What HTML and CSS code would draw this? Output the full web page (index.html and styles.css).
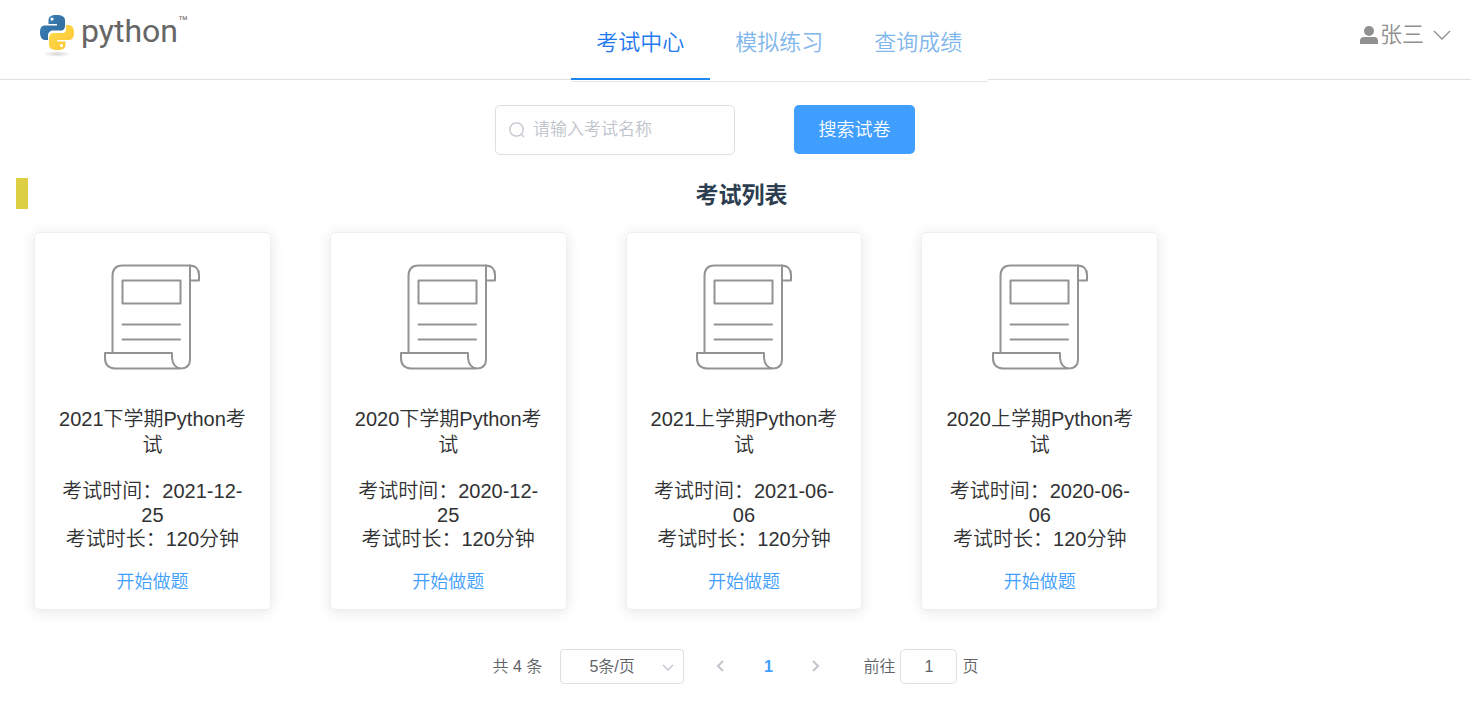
FILE: index.html
```html
<!DOCTYPE html>
<html lang="zh-CN">

<head>
  <meta charset="UTF-8" />
  <meta name="viewport" content="width=device-width, initial-scale=1.0" />
  <title>考试中心</title>
  <link rel="stylesheet" href="styles.css">
</head>

<body>
  <!-- 公共图标 -->
  <svg class="icon-defs" aria-hidden="true">
    <symbol id="icon-paper" viewBox="0 0 96 106">
      <g fill="none" stroke="#939393" stroke-width="2" stroke-linejoin="round" stroke-linecap="round">
        <path d="M8.500 88V12Q8.500 1.500 18.500 1.500H86Q95 2 95 11V16.500H86.500" />
        <path d="M86 1.500V95Q86 104.500 77 104.500H11Q1 104 1 94V89H68V94Q69 104 77 104.500" />
        <path d="M18.500 16.500H76.500V39.500H18.500Z" />
        <path d="M18.500 60.500H76M18.500 75.500H76" />
      </g>
    </symbol>
  </svg>

  <header class="header">
    <a class="logo" href="#">
      <svg class="logo-image" width="36" height="44" viewBox="0 0 36 44" aria-hidden="true">
        <defs>
          <linearGradient id="logoBlue" x1="0" y1="0" x2="1" y2="1">
            <stop offset="0" stop-color="#3d82b8" />
            <stop offset="1" stop-color="#2f6799" />
          </linearGradient>
          <linearGradient id="logoYellow" x1="0" y1="0" x2="1" y2="1">
            <stop offset="0" stop-color="#ffdc50" />
            <stop offset="1" stop-color="#fbc530" />
          </linearGradient>
          <radialGradient id="logoShadow">
            <stop offset="0" stop-color="#d4d4d4" />
            <stop offset="1" stop-color="#fff" />
          </radialGradient>
        </defs>
        <ellipse cx="18" cy="40" rx="14" ry="3" fill="url(#logoShadow)" />
        <path fill="url(#logoBlue)" d="M17.500 1C12 1 9.500 3 9.500 6V10H18V11.500H6C2.500 11.500 1 14 1 18.500S3 26 6 26H9V21.500C9 18.500 11.500 16.500 14 16.500H22C24.500 16.500 26 14.500 26 12V6C26 3 23 1 17.500 1ZM13 3.500A1.600 1.600 0 1 1 13 6.700A1.600 1.600 0 1 1 13 3.500Z" fill-rule="evenodd" />
        <path fill="url(#logoYellow)" d="M18.500 36C24 36 26.500 34 26.500 31V27.500H18V26H30C33.500 26 35 23 35 18.500S33 11 30 11H27V15.500C27 18.500 24.500 19 22 19H14C11.500 19 10 22 10 24.500V31C10 34 13 36 18.500 36ZM22.500 30A1.600 1.600 0 1 1 22.500 33.200A1.600 1.600 0 1 1 22.500 30Z" fill-rule="evenodd" />
      </svg>
      <span class="logo-name">python</span>
      <span class="logo-tm">™</span>
    </a>
    <div class="header-right">
      <nav class="menu">
        <a class="menu-item active" href="#">考试中心</a>
        <a class="menu-item" href="#">模拟练习</a>
        <a class="menu-item" href="#">查询成绩</a>
      </nav>
      <button class="user" type="button">
        <svg width="18" height="18" viewBox="0 0 18 18" aria-hidden="true">
          <circle cx="9" cy="5" r="5" fill="#909090" />
          <path d="M0 18V15Q0 11 4 11H14Q18 11 18 15V18Z" fill="#909090" />
        </svg>
        <span class="user-name">张三</span>
        <svg class="user-arrow" width="18" height="10" viewBox="0 0 18 10" aria-hidden="true">
          <path d="M1 1L9 9L17 1" fill="none" stroke="#909090" stroke-width="1.400" />
        </svg>
      </button>
    </div>
  </header>

  <main>
    <form class="search">
      <label class="search-box">
        <svg width="16" height="16" viewBox="0 0 16 16" aria-hidden="true">
          <circle cx="7.500" cy="7.500" r="6.700" fill="none" stroke="#c0c4cc" stroke-width="1.300" />
          <path d="M12 12L15 15" stroke="#c0c4cc" stroke-width="1.300" />
        </svg>
        <input class="search-input" type="text" placeholder="请输入考试名称" aria-label="考试名称" />
      </label>
      <button class="search-btn" type="button">搜索试卷</button>
    </form>

    <h2 class="title">考试列表</h2>

    <div class="exam-list">
      <article class="card">
        <svg class="card-image" aria-hidden="true"><use href="#icon-paper" /></svg>
        <h3 class="card-name">2021下学期Python考试</h3>
        <p class="card-info">考试时间：2021-12-25</p>
        <p class="card-info">考试时长：120分钟</p>
        <a class="card-link" href="#">开始做题</a>
      </article>
      <article class="card">
        <svg class="card-image" aria-hidden="true"><use href="#icon-paper" /></svg>
        <h3 class="card-name">2020下学期Python考试</h3>
        <p class="card-info">考试时间：2020-12-25</p>
        <p class="card-info">考试时长：120分钟</p>
        <a class="card-link" href="#">开始做题</a>
      </article>
      <article class="card">
        <svg class="card-image" aria-hidden="true"><use href="#icon-paper" /></svg>
        <h3 class="card-name">2021上学期Python考试</h3>
        <p class="card-info">考试时间：2021-06-06</p>
        <p class="card-info">考试时长：120分钟</p>
        <a class="card-link" href="#">开始做题</a>
      </article>
      <article class="card">
        <svg class="card-image" aria-hidden="true"><use href="#icon-paper" /></svg>
        <h3 class="card-name">2020上学期Python考试</h3>
        <p class="card-info">考试时间：2020-06-06</p>
        <p class="card-info">考试时长：120分钟</p>
        <a class="card-link" href="#">开始做题</a>
      </article>
    </div>

    <div class="pagination">
      <span class="total">共 4 条</span>
      <div class="size">
        <select class="size-select" aria-label="每页条数">
          <option>5条/页</option>
          <option>10条/页</option>
          <option>20条/页</option>
        </select>
        <svg class="size-arrow" width="12" height="8" viewBox="0 0 12 8" aria-hidden="true">
          <path d="M1 1L6 6L11 1" fill="none" stroke="#c0c4cc" stroke-width="1.300" />
        </svg>
      </div>
      <button class="page-btn" type="button" aria-label="上一页" disabled>
        <svg width="8" height="12" viewBox="0 0 8 12"><path d="M7 1L2 6L7 11" fill="none" stroke="#c0c4cc" stroke-width="2" /></svg>
      </button>
      <button class="page-btn current" type="button">1</button>
      <button class="page-btn" type="button" aria-label="下一页" disabled>
        <svg width="8" height="12" viewBox="0 0 8 12"><path d="M1 1L6 6L1 11" fill="none" stroke="#c0c4cc" stroke-width="2" /></svg>
      </button>
      <div class="jump">
        <label for="jumpPage">前往</label>
        <input id="jumpPage" class="jump-input" type="text" value="1" />
        <span>页</span>
      </div>
    </div>
  </main>
</body>

</html>
```
FILE: styles.css
```css
* {
  box-sizing: border-box;
}

body {
  margin: 0;
  color: #303133;
  background: #fff;
  font-family: "Liberation Sans", "Noto Sans CJK SC", sans-serif;
  font-weight: 350;
}

a {
  text-decoration: none;
}

button,
input,
select {
  font-family: inherit;
  font-weight: inherit;
}

.icon-defs {
  display: none;
}

/* 顶部导航 */
.header {
  display: grid;
  grid-template-columns: 38.8% 1fr;
  height: 80px;
  border-bottom: 1px solid #e0e0e0;
}

.logo {
  display: flex;
  align-items: flex-start;
  padding: 14px 0 0 39px;
  color: #666;
}

.logo-name {
  margin-left: 6px;
  font-family: Roboto, sans-serif;
  font-size: 32px;
  font-weight: 400;
  line-height: 34px;
}

.logo-tm {
  font-size: 10px;
  line-height: 12px;
}

.header-right {
  display: flex;
  justify-content: space-between;
  align-items: flex-start;
  padding-right: 20px;
}

.menu {
  display: flex;
  height: 82px;
  border-bottom: 1px solid #e6e6e6;
  background: #fff;
}

.menu-item {
  min-width: 139px;
  height: 80px;
  padding: 0 25px;
  font-size: 22px;
  line-height: 86px;
  text-align: center;
  color: #7fb6ec;
}

.menu-item.active {
  border-bottom: 2px solid #1e87f0;
  color: #1e78f0;
}

.user {
  display: flex;
  align-items: center;
  gap: 2px;
  padding: 18px 0 0;
  border: 0;
  background: none;
  color: #909090;
  font-size: 22px;
  line-height: 34px;
}

.user-arrow {
  margin-left: 7px;
}

/* 搜索 */
.search {
  display: flex;
  justify-content: center;
  gap: 59px;
  padding: 25px 61px 0 0;
}

.search-box {
  display: flex;
  align-items: center;
  width: 240px;
  height: 50px;
  padding: 0 13px;
  border: 1px solid #dcdfe6;
  border-radius: 5px;
}

.search-input {
  flex: 1;
  min-width: 0;
  padding: 0 0 0 8px;
  border: 0;
  outline: none;
  font-size: 17px;
}

.search-input::placeholder {
  color: #c0c4cc;
}

.search-btn {
  min-width: 121px;
  height: 49px;
  padding: 0 24px 3px;
  border: 0;
  border-radius: 5px;
  background: #409eff;
  color: #fff;
  font-size: 18px;
}

.title {
  margin: 23px 16px;
  padding-top: 4px;
  border-left: 12px solid #dcd042;
  color: #2c3e50;
  font-size: 23px;
  font-weight: 700;
  line-height: 27px;
  text-align: center;
}

/* 考试列表 */
.exam-list {
  display: grid;
  grid-template-columns: repeat(5, 1fr);
  gap: 59px;
  padding: 0 17px 0 34px;
}

.card {
  display: flex;
  flex-direction: column;
  align-items: center;
  padding: 31px 20px 13px;
  border: 1px solid #ebeef5;
  border-radius: 5px;
  box-shadow: 0 2px 14px rgba(0, 0, 0, 0.1);
  text-align: center;
}

.card-image {
  width: 96px;
  height: 106px;
}

.card-name {
  margin: 36px 0 21px;
  font-size: 20px;
  font-weight: inherit;
  line-height: 26px;
}

.card-info {
  margin: 0;
  font-size: 20px;
  line-height: 24px;
}

.card-link {
  margin-top: 17px;
  color: #409eff;
  font-size: 18px;
  line-height: 28px;
}

/* 分页 */
.pagination {
  display: flex;
  justify-content: center;
  align-items: center;
  padding: 39px 0;
  color: #606266;
  font-size: 16px;
}

.total {
  padding-bottom: 3px;
}

.size {
  position: relative;
  margin: 0 12px 0 18px;
}

.size-select {
  width: 124px;
  height: 35px;
  padding: 0 28px;
  border: 1px solid #dcdfe6;
  border-radius: 4px;
  background: #fff;
  color: #606266;
  font-size: 16px;
  appearance: none;
}

.size-arrow {
  position: absolute;
  top: 15px;
  right: 10px;
}

.page-btn {
  width: 48px;
  height: 35px;
  padding: 0;
  border: 0;
  background: none;
  font-size: 16px;
}

.page-btn.current {
  color: #409eff;
  font-weight: 700;
}

.jump {
  display: flex;
  align-items: center;
  gap: 5px;
  margin-left: 23px;
}

.jump label,
.jump span {
  padding-bottom: 3px;
}

.jump-input {
  width: 57px;
  height: 35px;
  border: 1px solid #dcdfe6;
  border-radius: 5px;
  color: #606266;
  font-size: 16px;
  text-align: center;
}
```
